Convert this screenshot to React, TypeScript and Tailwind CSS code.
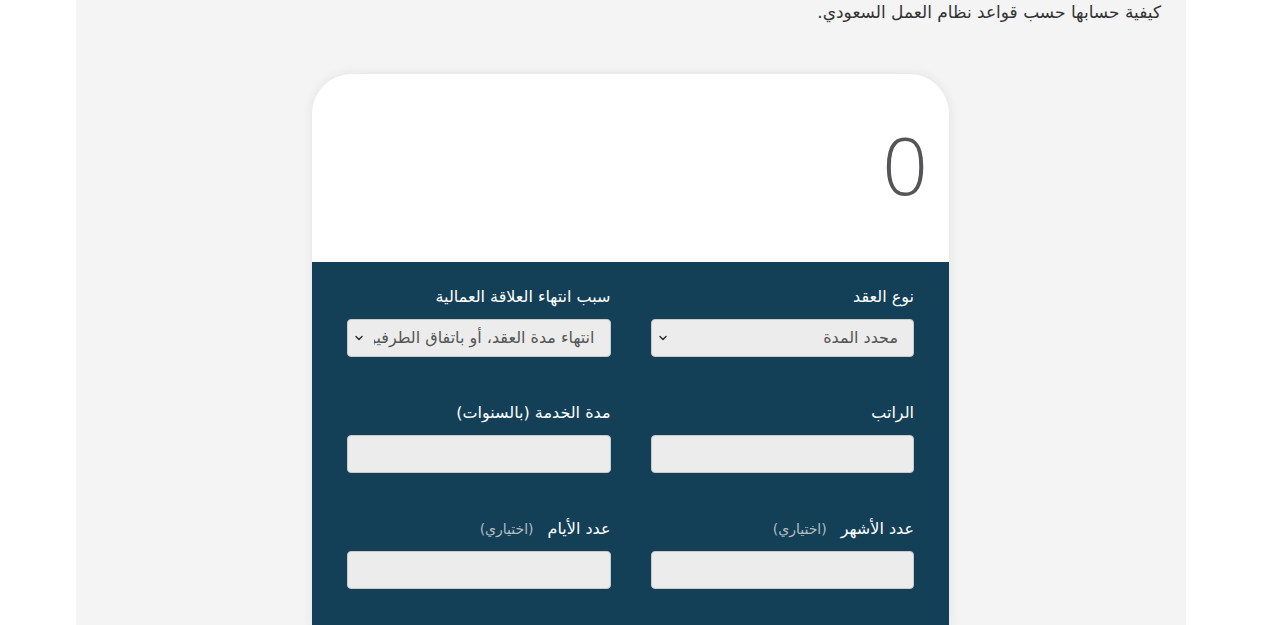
import { ChevronDown } from 'lucide-react';

const font = { fontFamily: '"DejaVu Sans", "Noto Sans", sans-serif' };

function Field({ label, hint, select }: { label: string; hint?: boolean; select?: string }) {
  return (
    <div className="flex flex-col">
      <label className="flex items-center gap-[14px] text-[16px] text-white h-[22px] mt-[1px] mb-[11px]">
        <span>{label}</span>
        {hint && <span className="text-[14px] text-[#b5bcc2]">(اختياري)</span>}
      </label>
      {select !== undefined ? (
        <div className="relative h-[38px] rounded-[4px] border border-[#c9c9c9] bg-[#ececec] flex items-center pr-[15px] pl-[26px]">
          <span className="block text-[16px] text-[#555] whitespace-nowrap overflow-hidden">{select}</span>
          <ChevronDown className="absolute left-[5px] top-[12px] w-[12px] h-[12px] text-[#333]" strokeWidth={3} />
        </div>
      ) : (
        <div className="h-[38px] rounded-[4px] border border-[#c9c9c9] bg-[#ececec]" />
      )}
    </div>
  );
}

export default function App() {
  return (
    <div dir="rtl" className="min-h-screen bg-white" style={font}>
      <div className="mr-[97px] w-[1110px] bg-[#f4f4f4] min-h-[625px] px-[25px]">
        <p className="text-[17px] text-[#333] leading-[24px]">
          كيفية حسابها حسب قواعد نظام العمل السعودي.
        </p>
        <div className="mr-[212px] mt-[50px] w-[637px] rounded-t-[40px] overflow-hidden shadow-[0_0_12px_rgba(0,0,0,0.08)]">
          <div className="h-[188px] bg-white flex items-center pr-[21px]">
            <span className="text-[80px] font-light text-[#545459] leading-none mt-[-8px]" style={{ fontFamily: '"Open Sans", sans-serif' }}>0</span>
          </div>
          <div className="bg-[#134057] px-[35px] pt-[23px] pb-[40px] grid grid-cols-2 gap-x-[40px] gap-y-[44px]">
            <Field label="نوع العقد" select="محدد المدة" />
            <Field label="سبب انتهاء العلاقة العمالية" select="انتهاء مدة العقد، أو باتفاق الطرفين على إنهاء العقد" />
            <Field label="الراتب" />
            <Field label="مدة الخدمة (بالسنوات)" />
            <Field label="عدد الأشهر" hint />
            <Field label="عدد الأيام" hint />
          </div>
        </div>
      </div>
    </div>
  );
}
